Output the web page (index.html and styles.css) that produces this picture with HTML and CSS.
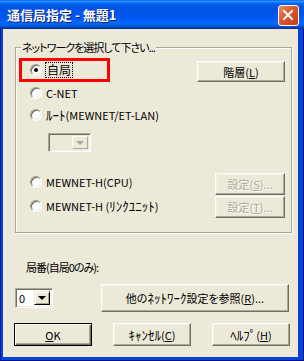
FILE: index.html
```html
<!doctype html>
<html lang="ja">
<head>
	<meta charset="utf-8">
	<meta name="viewport" content="width=device-width, initial-scale=1">
	<title>通信局指定</title>
	<link rel="stylesheet" href="styles.css">
</head>
<body>

	<div class="window">

		<header class="titlebar">
			<span class="title">通信局指定 - 無題1</span>
			<span class="close">
				<svg width="19" height="19" viewBox="0 0 19 19">
					<path d="M5 5 L13 13 M13 5 L5 13" stroke="#fff" stroke-width="2" stroke-linecap="square" fill="none"/>
				</svg>
			</span>
		</header>

		<main class="client">

			<!-- network choice -->
			<section class="group">
				<span class="legend">ネットワークを選択して下さい...</span>

				<div class="row row-first">
					<div class="mark">
						<label class="opt"><span class="radio checked"></span><span class="focus">自局</span></label>
					</div>
					<button class="btn btn-layer">階層(<u>L</u>)</button>
				</div>

				<div class="row">
					<label class="opt"><span class="radio"></span>C-NET</label>
				</div>

				<div class="row">
					<label class="opt"><span class="radio"></span><span><span class="hw">ﾙｰﾄ</span>(MEWNET/ET-LAN)</span></label>
				</div>

				<div class="combo combo-off">
					<span class="combo-field"></span>
					<span class="combo-btn"><i class="arrow"></i></span>
				</div>

				<div class="row row-set row-cpu">
					<label class="opt"><span class="radio"></span>MEWNET-H(CPU)</label>
					<button class="btn btn-set" disabled>設定(<u>S</u>)...</button>
				</div>

				<div class="row row-set row-link">
					<label class="opt"><span class="radio"></span><span>MEWNET-H (<span class="hw">ﾘﾝｸﾕﾆｯﾄ</span>)</span></label>
					<button class="btn btn-set" disabled>設定(<u>T</u>)...</button>
				</div>
			</section>

			<!-- station number -->
			<div class="station-label">局番(自局0のみ):</div>

			<div class="station-row">
				<div class="combo combo-no">
					<span class="combo-field">0</span>
					<span class="combo-btn"><i class="arrow"></i></span>
				</div>
				<button class="btn btn-other"><span>他の<span class="hw">ﾈｯﾄﾜｰｸ</span>設定を参照(<u>R</u>)...</span></button>
			</div>

			<div class="actions">
				<button class="btn btn-act btn-default"><u>O</u>K</button>
				<button class="btn btn-act"><span><span class="hw">ｷｬﾝｾﾙ</span>(<u>C</u>)</span></button>
				<button class="btn btn-act"><span><span class="hw">ﾍﾙﾌﾟ</span>(<u>H</u>)</span></button>
			</div>

		</main>
	</div>

</body>
</html>
```

FILE: styles.css
```css
		:root {
			--face: #ece9d8;
			--light: #f1efe2;
			--shadow: #aca899;
			--dark: #716f64;
			--frame: #0842d6;
		}

		* { box-sizing: border-box; }

		html, body {
			margin: 0;
			height: 100%;
		}
		body {
			background: #fff;
			font-family: "Noto Sans CJK JP", sans-serif;
			font-size: 11px;
			line-height: 14px;
			color: #000;
			font-feature-settings: "palt";
		}

		.window {
			width: 304px;
			height: 361px;
			display: flex;
			flex-direction: column;
			background: var(--frame);
			box-shadow: inset 1px 0 0 #0019a8, inset -1px 0 0 #00138c, inset 0 -1px 0 #00138c;
		}

		/* title bar */
		.titlebar {
			flex: none;
			height: 29px;
			display: flex;
			align-items: center;
			padding: 1px 5px 0 7px;
			background: linear-gradient(to bottom, #0058ee 0%, #3593ff 4%, #288eff 6%, #127dff 8%, #036ffc 10%, #0262ee 14%, #0057e5 20%, #0054e3 24%, #0055eb 56%, #005bf5 66%, #026afe 76%, #0062ef 86%, #0052d6 92%, #0040ab 94%, #003092 100%);
		}
		.title {
			color: #fff;
			font-weight: bold;
			font-size: 13px;
			text-shadow: 1px 1px 0 #0a1e80;
		}
		.close {
			margin-left: auto;
			width: 21px;
			height: 21px;
			display: flex;
			border: 1px solid #fff;
			border-radius: 3px;
			background: linear-gradient(135deg, #ec8f6c 0%, #dc5a2f 40%, #c73d14 100%);
		}

		/* client area */
		.client {
			flex: 1;
			margin: 0 6px 4px 3px;
			padding: 18px 0 0 12px;
			background: var(--face);
		}

		.group {
			position: relative;
			width: 277px;
			height: 186px;
			padding: 10px 0 0 0;
			border: 1px solid var(--shadow);
			box-shadow: 1px 1px 0 #fff, inset 1px 1px 0 #fff;
			display: flex;
			flex-direction: column;
		}
		.legend {
			position: absolute;
			top: -8px;
			left: 5px;
			padding: 0 1px;
			background: var(--face);
			white-space: nowrap;
			letter-spacing: -1px;
		}

		.hw {
			font-size: 13px;
			font-feature-settings: normal;
		}

		.row {
			display: flex;
			align-items: center;
			height: 22px;
		}
		.row > .opt { margin-left: 14px; }

		.row-first { height: 24px; }
		.mark {
			width: 91px;
			height: 24px;
			margin-left: 3px;
			padding-left: 8px;
			border: 3px solid #ff0000;
			display: flex;
			align-items: center;
		}
		.btn-layer {
			align-self: flex-end;
			margin: 0 6px 0 auto;
			width: 88px;
			height: 21px;
		}

		.opt {
			display: flex;
			align-items: center;
			gap: 4px;
			white-space: nowrap;
		}
		.radio {
			position: relative;
			width: 12px;
			height: 12px;
			flex: none;
			border-radius: 50%;
			background: #fff;
			border: 1px solid;
			border-color: #9d9a8a #fff #fff #9d9a8a;
			box-shadow: inset 1px 1px 0 var(--dark), inset -1px -1px 0 var(--light);
		}
		.radio.checked::after {
			content: "";
			position: absolute;
			left: 3px;
			top: 3px;
			width: 4px;
			height: 4px;
			border-radius: 50%;
			background: #000;
		}
		.focus {
			margin-left: -1px;
			padding: 0 1px;
			border: 1px dotted #000;
			font-size: 12px;
		}

		/* combos */
		.combo {
			display: flex;
			padding: 2px;
			border: 1px solid;
			border-color: var(--shadow) #fff #fff var(--shadow);
			box-shadow: inset 1px 1px 0 var(--dark), inset -1px -1px 0 var(--light);
			background: #fff;
		}
		.combo-field {
			flex: 1;
			padding-left: 1px;
			line-height: 14px;
		}
		.combo-btn {
			width: 16px;
			display: flex;
			align-items: center;
			justify-content: center;
			background: var(--face);
			border: 1px solid;
			border-color: var(--face) #000 #000 var(--face);
			box-shadow: inset 1px 1px 0 #fff, inset -1px -1px 0 var(--shadow);
		}
		.arrow {
			width: 0;
			height: 0;
			border-left: 4px solid transparent;
			border-right: 4px solid transparent;
			border-top: 4px solid #000;
		}
		.combo-off {
			margin: 7px 0 0 32px;
			width: 43px;
			height: 19px;
			background: var(--face);
		}
		.combo-off .combo-btn {
			border-color: #fff var(--shadow) var(--shadow) #fff;
			box-shadow: none;
		}
		.combo-off .arrow { border-top-color: var(--shadow); }

		.row-set { align-items: flex-start; }
		.row-cpu { margin-top: 21px; }
		.row-link { margin-top: 1px; }
		.row-cpu .opt { margin-top: 1px; height: 16px; }
		.row-link .opt { margin-top: 2px; height: 16px; }
		.btn-set {
			margin: 0 6px 0 auto;
			width: 70px;
			height: 22px;
		}

		/* buttons */
		.btn {
			font: inherit;
			font-feature-settings: "palt";
			color: #000;
			background: var(--face);
			padding: 0;
			display: flex;
			align-items: center;
			justify-content: center;
			white-space: nowrap;
			border: 1px solid;
			border-color: #fff var(--dark) var(--dark) #fff;
			box-shadow: inset -1px -1px 0 var(--shadow), inset 1px 1px 0 var(--light);
		}
		.btn:disabled {
			color: var(--shadow);
			text-shadow: 1px 1px 0 #fff;
		}
		.btn-default {
			border-color: #000;
			box-shadow: inset 1px 1px 0 #fff, inset -1px -1px 0 var(--dark), inset -2px -2px 0 var(--shadow);
		}
		u { text-underline-offset: 1px; }

		/* bottom part */
		.station-label {
			margin-top: 27px;
			margin-left: 11px;
			height: 16px;
			letter-spacing: -1px;
		}
		.station-row {
			margin-top: 8px;
			height: 28px;
			display: flex;
			align-items: center;
		}
		.combo-no {
			width: 38px;
			height: 20px;
		}
		.btn-other {
			margin-left: 48px;
			width: 188px;
			height: 28px;
		}

		.actions {
			margin-top: 11px;
			display: flex;
			gap: 21px;
			margin-left: -1px;
		}
		.btn-act {
			width: 78px;
			height: 23px;
		}
```
